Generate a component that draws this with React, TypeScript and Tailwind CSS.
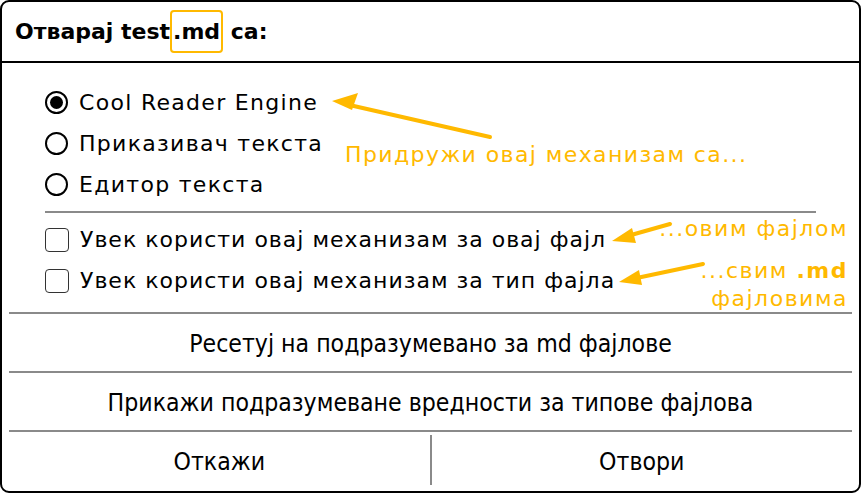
const ORANGE = "#ffb900";

function Radio({ checked, label }: { checked?: boolean; label: string }) {
    return (
        <div className="flex h-[41px] items-center">
            <span className="flex h-[23px] w-[23px] items-center justify-center rounded-full border-2 border-black">
                {checked && <span className="h-[13px] w-[13px] rounded-full bg-black" />}
            </span>
            <span className="ml-[11px] text-[22px] tracking-[1.3px] text-black">{label}</span>
        </div>
    );
}

function Check({ label }: { label: string }) {
    return (
        <div className="flex h-[41px] items-center">
            <span className="h-[24px] w-[24px] rounded-[4px] border-[1.5px] border-[#333]" />
            <span className="ml-[11px] text-[22px] tracking-[1px] text-black">{label}</span>
        </div>
    );
}

export default function App() {
    return (
        <div className="h-[493px] w-[861px] bg-white" style={{ fontFamily: '"DejaVu Sans", sans-serif' }}>
            <div className="relative flex h-[493px] w-[861px] flex-col overflow-hidden rounded-[9px] border-2 border-black">
                <div className="flex h-[61px] shrink-0 items-center border-b-2 border-black pl-[13px]">
                    <span className="text-[22px] font-bold text-black">
                        Отварај test
                        <span className="inline-block rounded-[4px] border-[2.5px] border-[#ffb900] px-[1px] py-[7px] leading-[25px]">.md</span>
                        {" "}са:
                    </span>
                </div>

                <div className="flex flex-col px-[43px] pt-[19px]">
                    <Radio checked label="Cool Reader Engine" />
                    <Radio label="Приказивач текста" />
                    <Radio label="Едитор текста" />
                    <div className="mt-[6px] h-[2px] bg-[#8a8a8a]" />
                    <div className="mt-[6px]">
                        <Check label="Увек користи овај механизам за овај фајл" />
                        <Check label="Увек користи овај механизам за тип фајла" />
                    </div>
                </div>

                <div
                    className="mt-auto flex flex-col px-[7px] pb-[4px] text-[24.6px] text-black"
                    style={{ fontFamily: '"DejaVu Sans Condensed", sans-serif' }}
                >
                    <div className="h-[2px] bg-[#8a8a8a]" />
                    <div className="flex h-[57px] items-center justify-center pt-[4px]">Ресетуј на подразумевано за md фајлове</div>
                    <div className="h-[2px] bg-[#8a8a8a]" />
                    <div className="flex h-[57px] items-center justify-center pt-[4px]">Прикажи подразумеване вредности за типове фајлова</div>
                    <div className="h-[2px] bg-[#8a8a8a]" />
                    <div className="flex h-[55px] items-center">
                        <div className="flex flex-1 items-center justify-center pt-[5px]">Откажи</div>
                        <div className="h-[50px] w-[2px] bg-[#8a8a8a]" />
                        <div className="flex flex-1 items-center justify-center pt-[5px]">Отвори</div>
                    </div>
                </div>

                {/* annotations */}
                <svg className="pointer-events-none absolute left-[-2px] top-[-2px]" width="861" height="493">
                    <g stroke={ORANGE} strokeWidth="4" strokeLinecap="round" fill={ORANGE}>
                        <line x1="490" y1="137" x2="345" y2="104" />
                        <polygon points="332,101 358,93 352,110" stroke="none" />
                        <line x1="670" y1="224" x2="624" y2="237" />
                        <polygon points="612,241 632,228 636,243" stroke="none" />
                        <line x1="703" y1="264" x2="632" y2="279" />
                        <polygon points="619,282 639,270 642,285" stroke="none" />
                    </g>
                </svg>
                <div className="absolute left-[343px] top-[136px] text-[22px] tracking-[1.4px]" style={{ color: ORANGE }}>
                    Придружи овај механизам са...
                </div>
                <div className="absolute right-[11px] top-[213px] text-right text-[22px] leading-[27px] tracking-[1.5px]" style={{ color: ORANGE }}>
                    ...овим фајлом
                </div>
                <div className="absolute right-[11px] top-[255px] text-right text-[22px] leading-[28px] tracking-[1.5px]" style={{ color: ORANGE }}>
                    <div>
                        ...свим <span className="font-bold">.md</span>
                    </div>
                    <div>фајловима</div>
                </div>
            </div>
        </div>
    );
}
